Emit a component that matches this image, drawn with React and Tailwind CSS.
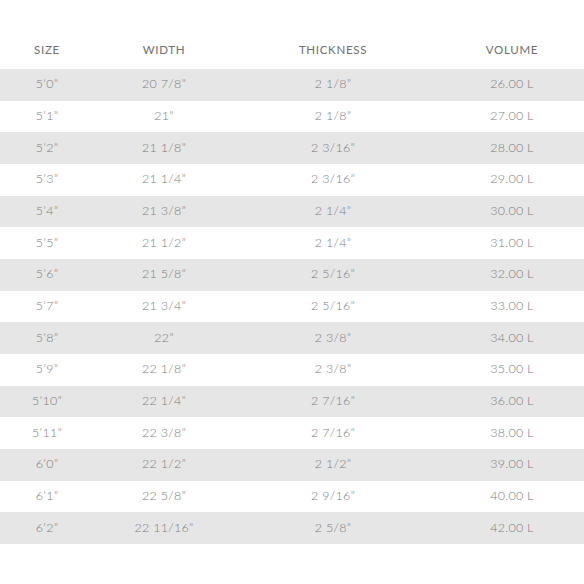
const rows = [
  ["5’0”", "20 7/8”", "2 1/8”", "26.00 L"],
  ["5’1”", "21”", "2 1/8”", "27.00 L"],
  ["5’2”", "21 1/8”", "2 3/16”", "28.00 L"],
  ["5’3”", "21 1/4”", "2 3/16”", "29.00 L"],
  ["5’4”", "21 3/8”", "2 1/4”", "30.00 L"],
  ["5’5”", "21 1/2”", "2 1/4”", "31.00 L"],
  ["5’6”", "21 5/8”", "2 5/16”", "32.00 L"],
  ["5’7”", "21 3/4”", "2 5/16”", "33.00 L"],
  ["5’8”", "22”", "2 3/8”", "34.00 L"],
  ["5’9”", "22 1/8”", "2 3/8”", "35.00 L"],
  ["5’10”", "22 1/4”", "2 7/16”", "36.00 L"],
  ["5’11”", "22 3/8”", "2 7/16”", "38.00 L"],
  ["6’0”", "22 1/2”", "2 1/2”", "39.00 L"],
  ["6’1”", "22 5/8”", "2 9/16”", "40.00 L"],
  ["6’2”", "22 11/16”", "2 5/8”", "42.00 L"],
]

const cols = "grid grid-cols-[94px_140px_198px_160px] text-center"

export default function App() {
  return (
    <div className="w-[584px] h-[584px] overflow-hidden bg-white font-['Lato',sans-serif] text-[#7d7d7d]">
      {/* header */}
      <div className={`${cols} mt-[31px] h-[38px] items-center text-[11.5px] tracking-[0.06em] text-[#6e6e6e]`}>
        <div>SIZE</div>
        <div>WIDTH</div>
        <div>THICKNESS</div>
        <div>VOLUME</div>
      </div>

      {/* body */}
      {rows.map((r, i) => (
        <div
          key={r[0]}
          className={`${cols} h-[31.67px] items-center text-[12.5px] font-light tracking-[0.02em] ${i % 2 === 0 ? "bg-[#e6e6e6]" : "bg-white"}`}
        >
          {r.map((c, j) => (
            <div key={j}>{c}</div>
          ))}
        </div>
      ))}
    </div>
  )
}
